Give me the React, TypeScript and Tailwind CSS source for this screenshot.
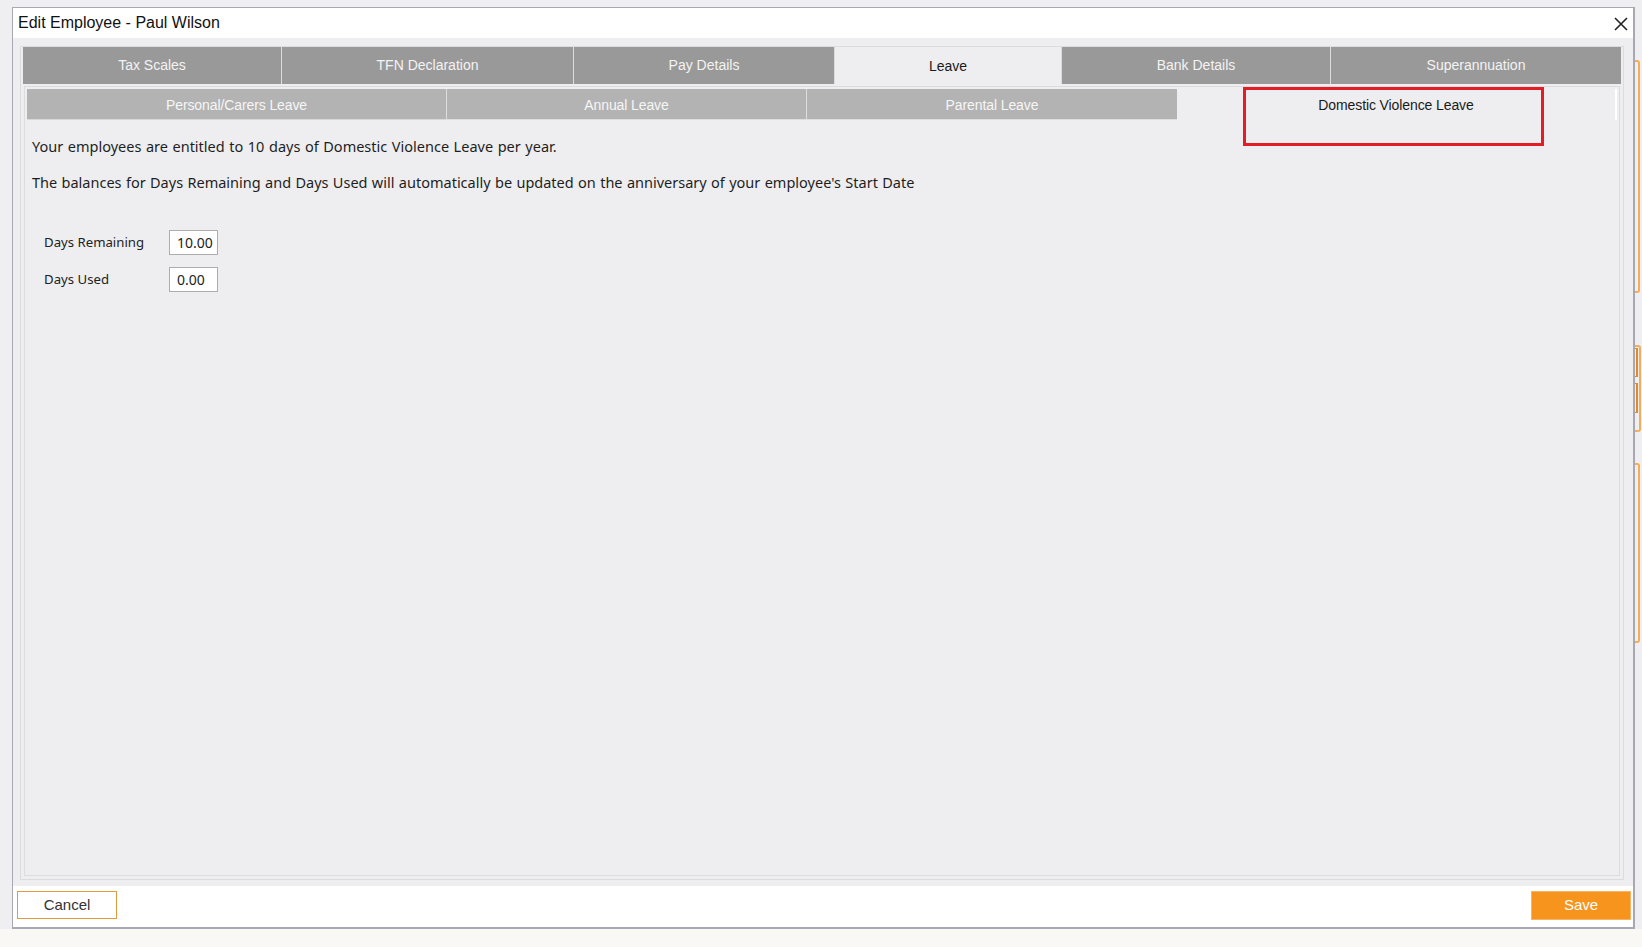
import React from 'react';

const topTabs = [
    { label: 'Tax Scales', w: 'w-[258px]' },
    { label: 'TFN Declaration', w: 'w-[292px]' },
    { label: 'Pay Details', w: 'w-[261px]' },
    { label: 'Leave', w: 'w-[227px]', active: true },
    { label: 'Bank Details', w: 'w-[269px]' },
    { label: 'Superannuation', w: 'flex-1' },
];

const subTabs = [
    { label: 'Personal/Carers Leave', w: 'w-[419px]' },
    { label: 'Annual Leave', w: 'w-[360px]' },
    { label: 'Parental Leave', w: 'w-[371px]' },
    { label: 'Domestic Violence Leave', w: 'flex-1', active: true },
];

const arial = { fontFamily: '"Liberation Sans", Arial, sans-serif' };

const App = () => {
    return (
        <div className="relative h-[947px] w-[1642px] flex flex-col bg-[#efeff1] overflow-hidden" style={arial}>
            <div className="h-[7px] shrink-0" />
            <div className="flex shrink-0">
                <div className="w-[12px] shrink-0" />

                {/* dialog */}
                <div className="w-[1623px] h-[922px] flex flex-col border border-r-2 border-b-2 border-[#a8a8b4] bg-white">
                    <div className="h-[30px] shrink-0 flex items-center justify-between pl-[5px] pr-[5px]">
                        <span className="text-[16px] text-[#111]">Edit Employee - Paul Wilson</span>
                        <svg width="14" height="14" viewBox="0 0 14 14" className="mt-[1px]">
                            <path d="M1 1 L13 13 M13 1 L1 13" stroke="#222" strokeWidth="1.6" />
                        </svg>
                    </div>

                    <div className="h-[848px] shrink-0 bg-[#eeeef0] pt-[8px] pl-[7px] pr-[9px] pb-[6px]">
                        <div className="h-full flex flex-col border border-[#dcdcdf] px-[2px]">
                            <div className="h-[37px] shrink-0 flex">
                                {topTabs.map((t, i) => (
                                    <div
                                        key={t.label}
                                        className={`${t.w} flex items-center justify-center text-[14px] ${i > 0 ? 'border-l border-[#dcdcdc]' : ''} ${t.active ? 'bg-[#eeeef0] text-[#1a1a1a] pt-[1px]' : 'bg-[#999999] text-[#f3f3f3]'}`}
                                    >
                                        {t.label}
                                    </div>
                                ))}
                            </div>

                            <div className="flex-1 flex flex-col mt-[2px] ml-[1px] mr-[1px] mb-[3px] border border-[#dcdcdf] px-[2px] pt-[2px]">
                                <div className="h-[31px] shrink-0 flex">
                                    {subTabs.map((t, i) => (
                                        <div
                                            key={t.label}
                                            className={`${t.w} flex items-center justify-center text-[14px] tracking-[-0.1px] pt-[2px] ${i > 0 && !t.active ? 'border-l border-[#dedede]' : ''} ${t.active ? 'bg-[#eeeef0] text-[#1a1a1a] border-r-2 border-white' : 'bg-[#b3b3b3] text-[#f6f6f6] border-b border-[#d8d8d8]'}`}
                                        >
                                            {t.label}
                                        </div>
                                    ))}
                                </div>

                                <div className="flex-1 pl-[5px] pt-[16px]" style={{ fontFamily: '"Noto Sans", "Open Sans", sans-serif' }}>
                                    <p className="text-[14.5px] leading-[20px] text-[#1e1e1e] [word-spacing:0.8px]">
                                        Your employees are entitled to 10 days of Domestic Violence Leave per year.
                                    </p>
                                    <p className="mt-[16px] text-[14.5px] leading-[20px] text-[#1e1e1e] [word-spacing:0.6px]">
                                        The balances for Days Remaining and Days Used will automatically be updated on the anniversary of your employee's Start Date
                                    </p>

                                    <div className="mt-[38px] ml-[12px] flex flex-col gap-[12px]">
                                        <div className="flex items-center h-[25px]">
                                            <span className="w-[125px] text-[13.2px] text-[#222]">Days Remaining</span>
                                            <div className="w-[49px] h-[25px] border border-[#adadad] bg-white text-[14px] text-[#222] pl-[7px] flex items-center">10.00</div>
                                        </div>
                                        <div className="flex items-center h-[25px]">
                                            <span className="w-[125px] text-[13.2px] text-[#222]">Days Used</span>
                                            <div className="w-[49px] h-[25px] border border-[#adadad] bg-white text-[14px] text-[#222] pl-[7px] flex items-center">0.00</div>
                                        </div>
                                    </div>
                                </div>
                            </div>
                        </div>
                    </div>

                    <div className="flex-1 flex justify-between items-start pt-[5px] pl-[4px] pr-[2px] bg-white">
                        <button className="w-[100px] h-[28px] border border-[#e59a3f] bg-white text-[15px] text-[#333]">Cancel</button>
                        <button className="w-[100px] h-[29px] bg-[#f7941d] border border-[#fbb363] text-[15px] text-white">Save</button>
                    </div>
                </div>

                {/* right gutter: edges of the window behind */}
                <div className="relative flex-1">
                    <div className="absolute left-[0px] top-[53px] w-[5px] h-[233px] border-t-2 border-r-2 border-b-2 border-[#f7ad55] rounded-r-[3px]" />
                    <div className="absolute left-[0px] top-[338px] w-[6px] h-[87px] border-t-2 border-r-2 border-b-2 border-[#f7ad55] rounded-r-[3px]" />
                    <div className="absolute left-[0px] top-[341px] w-[3px] h-[29px] border-t border-r-2 border-b border-[#e08a22]" />
                    <div className="absolute left-[0px] top-[376px] w-[3px] h-[30px] border-t border-r-2 border-b border-[#e08a22]" />
                    <div className="absolute left-[0px] top-[456px] w-[5px] h-[180px] border-t-2 border-r-2 border-b-2 border-[#f7ad55] rounded-r-[3px]" />
                </div>
            </div>
            <div className="flex-1 bg-[#f9f8f4]" />

            {/* highlight annotation */}
            <div className="absolute left-[1243px] top-[87px] w-[301px] h-[59px] border-[3px] border-[#e21d25]" />
        </div>
    );
};

export default App;
